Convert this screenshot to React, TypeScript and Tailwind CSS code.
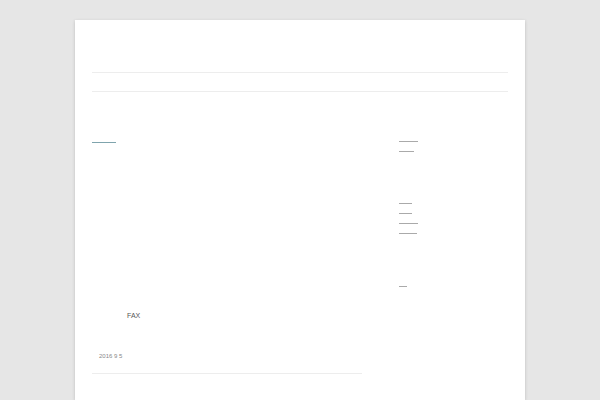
export default function App() {
  return (
    <div className="min-h-screen bg-[#e6e6e6] pt-[20px] font-['Liberation_Sans',Arial,sans-serif]">
      <div className="mx-auto min-h-[380px] w-[450px] bg-white px-[17px] shadow-[0_1px_3px_rgba(100,100,100,0.3)]">
        <header className="h-[52px]" />
        <nav className="h-[20px] border-y border-[#ededed]" />
        <div className="flex">
          <main className="w-[270px]">
            <span className="mt-[50px] block h-px w-[24px] bg-[#7fa4ad]" />
            <p className="mt-[168px] pl-[35px] text-[7px] leading-[10px] text-[#555]">FAX</p>
            <p className="mt-[30px] pl-[7px] text-[6px] leading-[10px] text-[#888]">2016 9 5</p>
            <div className="mt-[12px] h-px bg-[#ededed]" />
          </main>
          <aside className="ml-auto w-[109px]">
            <ul className="mt-[40px]">
              <li className="flex h-[10px] items-end"><span className="h-px w-[19px] bg-[#aaa]" /></li>
              <li className="flex h-[10px] items-end"><span className="h-px w-[15px] bg-[#aaa]" /></li>
            </ul>
            <ul className="mt-[42px]">
              <li className="flex h-[10px] items-end"><span className="h-px w-[13px] bg-[#aaa]" /></li>
              <li className="flex h-[10px] items-end"><span className="h-px w-[13px] bg-[#aaa]" /></li>
              <li className="flex h-[10px] items-end"><span className="h-px w-[19px] bg-[#aaa]" /></li>
              <li className="flex h-[10px] items-end"><span className="h-px w-[18px] bg-[#aaa]" /></li>
            </ul>
            <ul className="mt-[43px]">
              <li className="flex h-[10px] items-end"><span className="h-px w-[8px] bg-[#aaa]" /></li>
            </ul>
          </aside>
        </div>
      </div>
    </div>
  );
}
